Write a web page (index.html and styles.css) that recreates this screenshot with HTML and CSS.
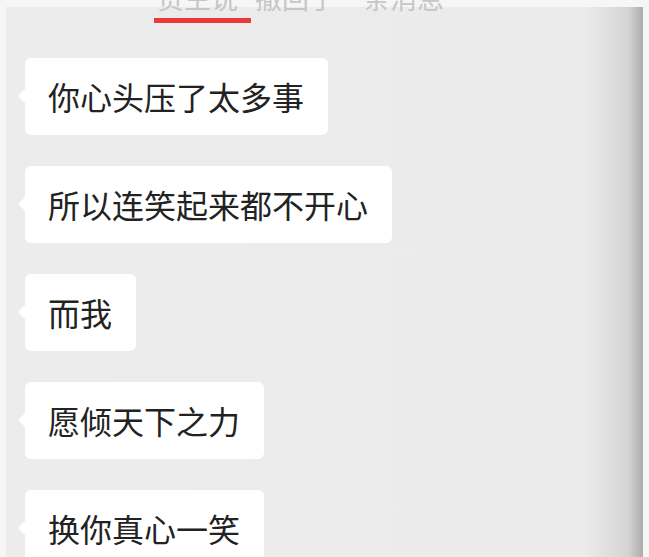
FILE: index.html
```html
<!DOCTYPE html>
<html lang="zh-CN">
<head>
  <meta charset="UTF-8">
  <meta name="viewport" content="width=device-width, initial-scale=1.0">
  <title>聊天记录</title>
  <link rel="stylesheet" href="styles.css">
</head>
<body>

  <div class="panel">
    <!-- 顶部提示（被裁掉一半） -->
    <div class="notice">
      <span class="notice-name">贵主说</span><span class="notice-text">撤回了一条消息</span>
    </div>

    <!-- 消息列表 -->
    <div class="messages">
      <div class="bubble">你心头压了太多事</div>
      <div class="bubble">所以连笑起来都不开心</div>
      <div class="bubble">而我</div>
      <div class="bubble">愿倾天下之力</div>
      <div class="bubble">换你真心一笑</div>
    </div>
  </div>

</body>
</html>
```

FILE: styles.css
```css
/* 全局 */
html, body {
  margin: 0;
  padding: 0;
  height: 100%;
  overflow: hidden;
}

body {
  background-color: #f6f6f6;
  font-family: 'Noto Sans CJK SC', 'Noto Sans', sans-serif;
}

.panel {
  height: 100%;
  box-sizing: border-box;
  border-top: 7px solid #f6f6f6;
  border-left: 6px solid #f6f6f6;
  border-right: 6px solid #f6f6f6;
  background: linear-gradient(to right, #ececec 0, #ebebeb 580px, #d4d4d4 622px, #adadad 637px);
}

/* 顶部提示 */
.notice {
  margin-top: -23px;
  padding-left: 148px;
  font-size: 27px;
  line-height: 27px;
  color: #c6c6c6;
  white-space: nowrap;
}

.notice-name {
  display: inline-block;
  padding: 0 13px 7px 3px;
  border-bottom: 5px solid #e83a3a;
}

.notice-text {
  margin-left: 4px;
}

/* 气泡 */
.messages {
  display: flex;
  flex-direction: column;
  align-items: flex-start;
  gap: 31px;
  margin-top: 35px;
  padding-left: 19px;
}

.bubble {
  position: relative;
  height: 77px;
  line-height: 77px;
  padding: 0 24px 0 23px;
  font-size: 32px;
  color: #222;
  background-color: #fff;
  border-radius: 6px;
  white-space: nowrap;
}

.bubble::before {
  content: '';
  position: absolute;
  left: -7px;
  top: 31px;
  border-top: 7px solid transparent;
  border-bottom: 7px solid transparent;
  border-right: 7px solid #fff;
}
```
